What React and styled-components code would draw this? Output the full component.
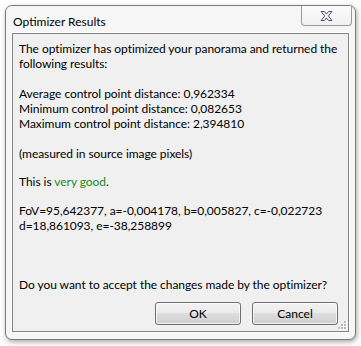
import React from "react";
import styled, { createGlobalStyle } from "styled-components";

const GlobalStyle = createGlobalStyle`
  html, body {
    margin: 0;
    padding: 0;
    background: #ffffff;
  }
  body {
    font-family: Lato, "Open Sans", sans-serif;
  }
`;

const Page = styled.div`
  width: 361px;
  height: 346px;
  padding: 5px 0 0 5px;
  box-sizing: border-box;
`;

const Window = styled.div`
  width: 351px;
  height: 335px;
  box-sizing: border-box;
  display: flex;
  flex-direction: column;
  background: #f6f6f6;
  border: 1px solid #7b7b7b;
  border-radius: 7px;
  box-shadow: 1px 2px 5px rgba(0, 0, 0, 0.35);
  padding: 0 6px 7px 6px;
`;

const TitleBar = styled.div`
  height: 27px;
  display: flex;
  justify-content: space-between;
  align-items: flex-start;
  flex-shrink: 0;
`;

const Title = styled.span`
  font-size: 12px;
  color: #000;
  padding: 8px 0 0 1px;
  line-height: 15px;
`;

const CloseButton = styled.div`
  width: 51px;
  height: 20px;
  margin-right: -3px;
  box-sizing: border-box;
  border: 1px solid #9a9a9a;
  border-top: none;
  border-radius: 0 0 4px 4px;
  background: linear-gradient(#fbfbfb, #f1f1f1);
  display: flex;
  align-items: center;
  justify-content: center;
  padding-top: 1px;
`;

const Client = styled.div`
  position: relative;
  flex: 1;
  display: flex;
  flex-direction: column;
  background: #f0f0f0;
  border: 1px solid #838383;
  box-shadow: 0 0 0 1px #ffffff;
  padding: 7px 4px 6px 6px;
  font-size: 12px;
  line-height: 15px;
  letter-spacing: -0.05px;
  color: #000;
`;

const Para = styled.p`
  margin: 0 0 ${({ $gap }) => $gap}px 0;
  white-space: pre;
`;

const Good = styled.span`
  color: #218a21;
`;

const Question = styled.p`
  margin: auto 0 10px 0;
  white-space: nowrap;
`;

const ButtonRow = styled.div`
  display: flex;
  justify-content: flex-end;
  gap: 11px;
  padding-right: 6px;
`;

const Button = styled.button`
  width: 86px;
  height: 23px;
  box-sizing: border-box;
  border: 1px solid #707070;
  border-radius: 3px;
  background: linear-gradient(#f2f2f2 0%, #ebebeb 50%, #dddddd 50%, #cfcfcf 100%);
  box-shadow: inset 0 0 0 1px rgba(255, 255, 255, 0.7);
  font-family: Lato, "Open Sans", sans-serif;
  font-size: 12px;
  color: #000;
  padding: 0;
`;

const Grip = styled.svg`
  position: absolute;
  right: 1px;
  bottom: 1px;
`;

const CloseGlyph = () => (
  <svg width="13" height="10" viewBox="0 0 13 10">
    <path
      d="M1 0.5 L4.5 0.5 L6.5 3 L8.5 0.5 L12 0.5 L8.3 5 L12 9.5 L8.5 9.5 L6.5 7 L4.5 9.5 L1 9.5 L4.7 5 Z"
      fill="#eceef4"
      stroke="#54596b"
      strokeWidth="1"
      strokeLinejoin="round"
    />
  </svg>
);

const GripDots = () => (
  <Grip width="10" height="10" viewBox="0 0 10 10">
    {[
      [7, 1],
      [4, 4],
      [7, 4],
      [1, 7],
      [4, 7],
      [7, 7],
    ].map(([x, y]) => (
      <g key={`${x}-${y}`}>
        <rect x={x + 1} y={y + 1} width="2" height="2" fill="#ffffff" />
        <rect x={x} y={y} width="2" height="2" fill="#b9b9b9" />
      </g>
    ))}
  </Grip>
);

const App = () => {
  return (
    <>
      <GlobalStyle />
      <Page>
        <Window>
          <TitleBar>
            <Title>Optimizer Results</Title>
            <CloseButton>
              <CloseGlyph />
            </CloseButton>
          </TitleBar>
          <Client>
            <Para $gap={15}>
              {"The optimizer has optimized your panorama and returned the\nfollowing results:"}
            </Para>
            <Para $gap={15}>
              {"Average control point distance: 0,962334\nMinimum control point distance: 0,082653\nMaximum control point distance: 2,394810"}
            </Para>
            <Para $gap={13}>(measured in source image pixels)</Para>
            <Para $gap={14}>
              This is <Good>very good</Good>.
            </Para>
            <Para $gap={0}>
              {"FoV=95,642377, a=-0,004178, b=0,005827, c=-0,022723\nd=18,861093, e=-38,258899"}
            </Para>
            <Question>Do you want to accept the changes made by the optimizer?</Question>
            <ButtonRow>
              <Button>OK</Button>
              <Button>Cancel</Button>
            </ButtonRow>
            <GripDots />
          </Client>
        </Window>
      </Page>
    </>
  );
};

export default App;
